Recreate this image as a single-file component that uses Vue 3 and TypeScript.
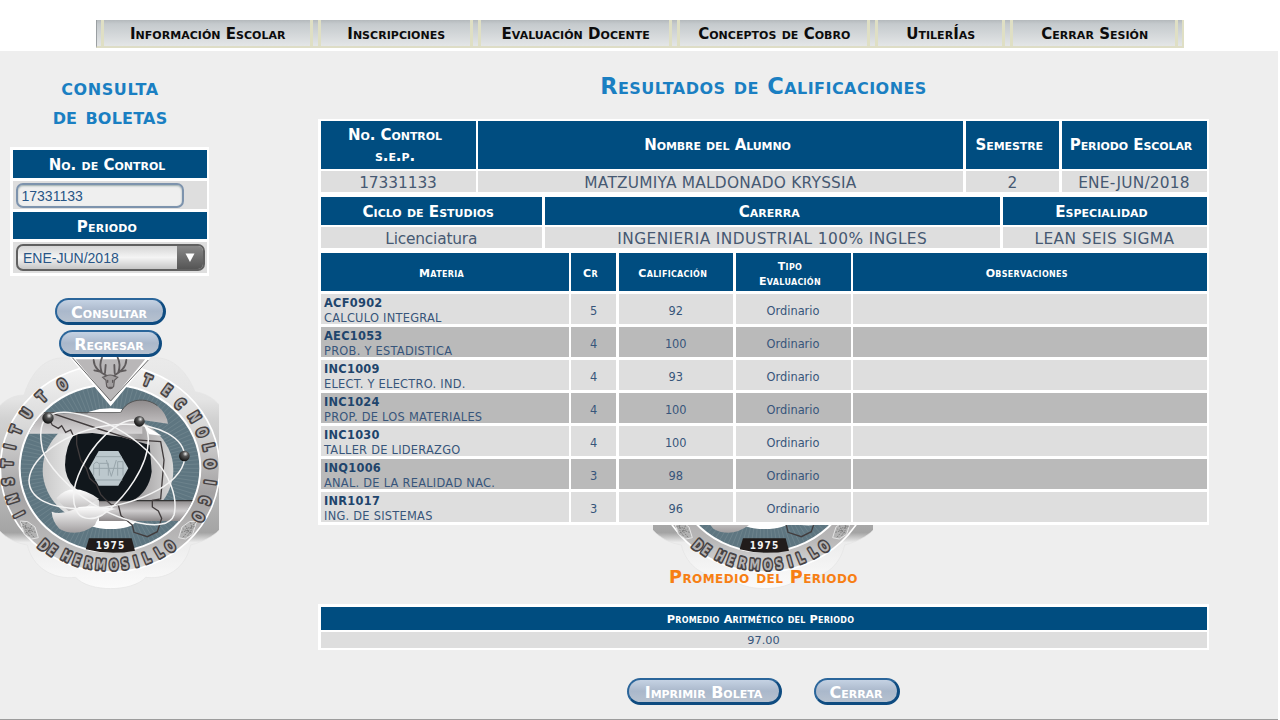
<script setup lang="ts">
interface NavItem { label: string; width: number }
interface Subject { code: string; name: string; credits: number; grade: number; kind: string }
interface Glyph { char: string; x: number; y: number; turn: number }

const navItems: NavItem[] = [
  { label: 'Información Escolar', width: 217 },
  { label: 'Inscripciones', width: 160 },
  { label: 'Evaluación Docente', width: 199 },
  { label: 'Conceptos de Cobro', width: 198 },
  { label: 'UtilerÍas', width: 135 },
  { label: 'Cerrar Sesión', width: 173 },
]

const subjects: Subject[] = [
  { code: 'ACF0902', name: 'CALCULO INTEGRAL', credits: 5, grade: 92, kind: 'Ordinario' },
  { code: 'AEC1053', name: 'PROB. Y ESTADISTICA', credits: 4, grade: 100, kind: 'Ordinario' },
  { code: 'INC1009', name: 'ELECT. Y ELECTRO. IND.', credits: 4, grade: 93, kind: 'Ordinario' },
  { code: 'INC1024', name: 'PROP. DE LOS MATERIALES', credits: 4, grade: 100, kind: 'Ordinario' },
  { code: 'INC1030', name: 'TALLER DE LIDERAZGO', credits: 4, grade: 100, kind: 'Ordinario' },
  { code: 'INQ1006', name: 'ANAL. DE LA REALIDAD NAC.', credits: 3, grade: 98, kind: 'Ordinario' },
  { code: 'INR1017', name: 'ING. DE SISTEMAS', credits: 3, grade: 96, kind: 'Ordinario' },
]

const cx = 333
const cy = 370
const deg = 180 / Math.PI

function ring(spec: [string, number, number][], flip: boolean): Glyph[] {
  return spec.map(([char, x, y]) => ({
    char, x, y,
    turn: Math.atan2(x - cx, cy - y) * deg + (flip ? 180 : 0),
  }))
}

const glyphs: Glyph[] = [
  ...ring([
    ['I', 60, 508], ['N', 40, 462], ['S', 27, 410], ['T', 24, 355], ['I', 32, 305],
    ['T', 50, 255], ['U', 82, 205], ['T', 127, 155], ['O', 190, 118],
    ['T', 445, 106], ['E', 504, 135], ['C', 543, 175], ['N', 587, 215], ['O', 610, 262],
    ['L', 630, 306], ['O', 634, 357], ['I', 634, 412], ['C', 618, 466], ['O', 599, 515],
  ], false),
  ...ring([
    ['D', 135, 601], ['E', 160, 615], ['H', 203, 632], ['E', 234, 645], ['R', 268, 653],
    ['M', 305, 658], ['O', 344, 659], ['S', 378, 656], ['I', 411, 649], ['L', 443, 638],
    ['L', 480, 622], ['O', 513, 604],
  ], true),
]

const rays: string = Array.from({ length: 120 }, (_, i) => {
  const a = (i * 3) / deg
  return `M${cx} ${cy}L${(cx + 268 * Math.cos(a)).toFixed(1)} ${(cy + 250 * Math.sin(a)).toFixed(1)}`
}).join('')
</script>

<template>
  <div class="page">
    <svg class="defs" width="0" height="0" aria-hidden="true">
      <defs>
        <linearGradient id="ringFill" x1="0" y1="0" x2="0" y2="1">
          <stop offset="0" stop-color="#f4f4f4" /><stop offset=".3" stop-color="#d8d8d8" />
          <stop offset=".62" stop-color="#a3a1a2" /><stop offset=".85" stop-color="#b9b8b8" /><stop offset="1" stop-color="#dcdcdc" />
        </linearGradient>
        <linearGradient id="lobeFill" x1="0" y1="0" x2="0" y2="1">
          <stop offset="0" stop-color="#ececec" /><stop offset=".22" stop-color="#e4e4e4" />
          <stop offset=".3" stop-color="#d2d2d2" /><stop offset=".55" stop-color="#bdbdbd" />
          <stop offset=".77" stop-color="#a4a4a4" /><stop offset=".81" stop-color="#ececec" />
          <stop offset="1" stop-color="#fbfbfb" />
        </linearGradient>
        <linearGradient id="steel" x1="0" y1="0" x2="0" y2="1">
          <stop offset="0" stop-color="#8f8b8c" /><stop offset="1" stop-color="#d6d4d5" />
        </linearGradient>
        <linearGradient id="pipe" x1="0" y1="0" x2="0" y2="1">
          <stop offset="0" stop-color="#8e8a8b" /><stop offset=".5" stop-color="#cfcdce" /><stop offset="1" stop-color="#8c8889" />
        </linearGradient>
        <linearGradient id="gear" x1="0" y1="0" x2="1" y2="0">
          <stop offset="0" stop-color="#c9c9c9" /><stop offset=".3" stop-color="#f0f0f0" />
          <stop offset=".75" stop-color="#a6a4a5" /><stop offset="1" stop-color="#d8d8d8" />
        </linearGradient>
        <linearGradient id="cap" x1="0" y1="0" x2="0" y2="1">
          <stop offset="0" stop-color="#fff" /><stop offset="1" stop-color="#a19e9f" />
        </linearGradient>
        <radialGradient id="ball" cx=".6" cy=".3" r=".7">
          <stop offset="0" stop-color="#eee" /><stop offset=".35" stop-color="#555" /><stop offset="1" stop-color="#111" />
        </radialGradient>
        <clipPath id="disc"><ellipse :cx="cx" :cy="cy" rx="268" ry="250" /></clipPath>

        <symbol id="seal" viewBox="0 0 660 750">
          <path
            d="M75 150C100 70 150 30 210 40C250 -10 410 -10 455 40C510 30 560 70 588 140C650 150 690 200 690 260V480C690 540 650 580 575 600C560 665 510 705 440 697C400 742 270 742 230 697C160 705 100 665 85 600C20 590 -30 540 -30 480V260C-30 200 20 150 75 150Z"
            fill="url(#lobeFill)" stroke="#e4e4e4" stroke-width="2"
          />
          <ellipse :cx="cx" :cy="cy" rx="329" ry="311" fill="url(#ringFill)" stroke="#fff" stroke-width="5" />
          <ellipse :cx="cx" :cy="cy" rx="271" ry="251" fill="#5f7681" stroke="#fff" stroke-width="6" />
          <g clip-path="url(#disc)">
            <path :d="rays" stroke="#93a4ac" stroke-width="1.6" opacity=".5" />
            <path d="M270 200Q333 180 400 200L420 215H260Z" fill="#fff" />
            <ellipse cx="327" cy="375" rx="196" ry="170" fill="url(#gear)" />
            <ellipse cx="335" cy="528" rx="75" ry="24" fill="#fff" />
            <path d="M60 266L130 205H365C385 160 440 155 475 182Q503 205 507 236L430 225V266Z" fill="url(#steel)" />
            <path d="M130 203H365C385 160 440 155 475 182" fill="none" stroke="#555" stroke-width="3" />
            <path d="M300 467H660V528H300Z" fill="url(#pipe)" />
            <path d="M300 467H660" stroke="#333" stroke-width="4" />
          </g>
          <path d="M226 268L280 264L365 275L452 300L458 380Q450 440 400 467H305Q200 440 198 360Q200 300 226 268Z" fill="#11171c" />
          <path d="M299 318H358L388 370L358 422H299L270 370Z" fill="#bcc8cd" />
          <path d="M284 392V358Q294 345 301 358V392M301 355H328V392M322 345L337 394L352 345M356 392V350H372V392M282 370H374M290 335H368M288 405H370" fill="none" stroke="#98a5ab" stroke-width="3" />
          <path d="M172 460Q220 405 300 462Q250 485 235 520Q200 495 172 460Z" fill="url(#cap)" />
          <path d="M158 500Q190 512 240 486Q300 480 355 492Q300 500 288 540Q235 580 182 552Q160 530 158 500Z" fill="url(#cap)" />
          <path d="M150 222L160 240L178 250L188 242L200 262L215 255L222 270L233 268V298L245 345L262 370L272 400L292 418L305 448L322 466L338 480H358L366 512L400 540L405 562L445 575L475 560L488 520L478 498L460 486V466L485 462L495 345L485 290L400 284L300 252L160 205" fill="none" stroke="#413c3d" stroke-width="4" />
          <g fill="none" stroke="#f4f4f4" stroke-width="4.5">
            <path d="M128 300C110 195 180 190 260 212C420 255 550 400 525 510C505 570 350 530 250 455C180 400 130 340 128 300Z" />
            <path d="M90 405C95 330 220 245 370 238C480 235 560 280 557 340C550 420 400 490 250 492C150 490 90 460 90 405Z" />
            <path d="M232 495C200 430 270 300 350 245C400 210 445 220 448 280C450 360 380 460 310 510C275 530 240 520 232 495Z" />
          </g>
          <path d="M435 240L488 272L450 268Z" fill="#fff" />
          <circle cx="147" cy="219" r="17" fill="url(#ball)" />
          <circle cx="421" cy="229" r="16" fill="url(#ball)" />
          <circle cx="556" cy="333" r="16" fill="url(#ball)" />

          <path d="M220 38H448L335 177Z" fill="#b9b7b8" stroke="#fff" stroke-width="9" />
          <path d="M220 38L335 168L448 45" fill="none" stroke="#666" stroke-width="3" />
          <g fill="none" stroke="#5f5b5c" stroke-width="5.5" stroke-linecap="round">
            <path d="M322 92C300 80 285 68 284 45M303 80L286 76M308 82Q300 58 309 38M318 84L320 60M345 92C365 80 381 68 382 45M362 80L380 76M358 82Q366 58 356 38M347 84L346 60" />
            <path d="M320 94Q333 86 347 94L356 97L346 106L344 124Q334 138 323 124L321 106L311 97Z" fill="#a19e9f" stroke-width="3.5" />
            <path d="M326 106V112M341 106V112M330 127H338" stroke-width="4" />
          </g>

          <path d="M270 580L398 580L408 617Q333 632 260 613Z" fill="#211c1b" />
          <text x="333" y="613" class="year" text-anchor="middle" textLength="86" lengthAdjust="spacing">1975</text>

          <g v-for="side in [1, -1]" :key="side" :transform="side === 1 ? '' : 'translate(657 0) scale(-1 1)'">
            <path d="M64 528L86 530L108 546L118 578L98 582L76 568Z" fill="#b2b2b2" stroke="#e5e5e5" stroke-width="3" />
            <path d="M66 530L106 578M82 532L78 552L92 574M98 542L90 556L110 562M70 545L96 550M80 564L104 552" stroke="#777" stroke-width="2.5" fill="none" stroke-dasharray="5 3" />
          </g>

          <text
            v-for="(g, i) in glyphs" :key="i" class="glyph" text-anchor="middle"
            :transform="`translate(${g.x} ${g.y}) rotate(${g.turn.toFixed(1)}) scale(.8 1)`" y="16"
          >{{ g.char }}</text>
        </symbol>
      </defs>
    </svg>

    <header class="top">
      <nav class="nav">
        <div v-for="item in navItems" :key="item.label" class="slot" :style="{ width: item.width + 'px' }">
          <a class="nav-link">{{ item.label }}</a>
        </div>
      </nav>
    </header>

    <main class="body">
      <aside class="side">
        <svg class="side-seal" width="220" height="250"><use href="#seal" width="220" height="250" /></svg>
        <h2 class="side-title"><span class="line-one">consulta</span><br><span class="line-two">de boletas</span></h2>
        <div class="form">
          <div class="form-head"><span>No. de Control</span></div>
          <div class="form-row"><div class="field">17331133</div></div>
          <div class="form-head"><span class="wide">Periodo</span></div>
          <div class="form-row select-row">
            <div class="select">
              <span>ENE-JUN/2018</span>
              <i class="arrow"><svg width="12" height="10" viewBox="0 0 12 10"><path d="M1.5 .5H10.5L6 9Z" fill="#fff" /></svg></i>
            </div>
          </div>
        </div>
        <button class="pill consult"><span>Consultar</span></button>
        <button class="pill back"><span>Regresar</span></button>
      </aside>

      <section class="results">
        <svg class="main-seal" width="220" height="250"><use href="#seal" width="220" height="250" /></svg>
        <h1 class="title">Resultados de Calificaciones</h1>

        <div class="sheet">
          <div class="grid student">
            <div class="head"><span>No. Control</span><span>s.e.p.</span></div>
            <div class="head"><span>Nombre del Alumno</span></div>
            <div class="head"><span>Semestre</span></div>
            <div class="head"><span>Periodo Escolar</span></div>
            <div class="value"><span>17331133</span></div>
            <div class="value"><span class="loose">MATZUMIYA MALDONADO KRYSSIA</span></div>
            <div class="value"><span>2</span></div>
            <div class="value"><span class="loose">ENE-JUN/2018</span></div>
          </div>
          <div class="grid career">
            <div class="head"><span>Ciclo de Estudios</span></div>
            <div class="head"><span>Carerra</span></div>
            <div class="head"><span>Especialidad</span></div>
            <div class="value"><span class="tight">Licenciatura</span></div>
            <div class="value"><span class="looser">INGENIERIA INDUSTRIAL 100% INGLES</span></div>
            <div class="value"><span class="looser">LEAN SEIS SIGMA</span></div>
          </div>
          <div class="grid marks marks-head">
            <div class="head">Materia</div>
            <div class="head">Cr</div>
            <div class="head">Calificación</div>
            <div class="head"><span>Tipo</span><span>Evaluación</span></div>
            <div class="head">Observaciones</div>
          </div>
          <div v-for="(s, i) in subjects" :key="s.code" class="grid marks marks-row" :class="{ dark: i % 2 === 1 }">
            <div class="cell subject"><b>{{ s.code }}</b><span>{{ s.name }}</span></div>
            <div class="cell">{{ s.credits }}</div>
            <div class="cell">{{ s.grade }}</div>
            <div class="cell">{{ s.kind }}</div>
            <div class="cell"></div>
          </div>
        </div>

        <h2 class="avg-title">Promedio del Periodo</h2>
        <div class="average">
          <div class="head"><span>Promedio Aritmético del Periodo</span></div>
          <div class="avg-value">97.00</div>
        </div>

        <div class="actions">
          <button class="pill print"><span>Imprimir Boleta</span></button>
          <button class="pill close"><span>Cerrar</span></button>
        </div>
      </section>
    </main>
  </div>
</template>

<style>
body { margin: 0; background: #fff; overflow: hidden; }
</style>

<style scoped>
.page { width: 1280px; height: 720px; overflow: hidden; background: #fff; font-family: Verdana, "DejaVu Sans", sans-serif; box-sizing: border-box; display: flex; flex-direction: column; }
.page * { box-sizing: border-box; }
.defs { position: absolute; }
.top { height: 51px; flex: none; padding: 20px 0 0 96px; }
.nav { width: 1088px; height: 27.5px; display: flex; padding-left: 4px; background: linear-gradient(#b4b9bc, #c5cacd 15%, #d3d7d9 55%, #e4e6e7); border-right: 2px solid #dfdfc4; border-bottom: 2px solid #deddc6; border-left: 1px solid #9a9fa2; }
.slot { flex: none; padding-right: 5.5px; }
.nav-link { height: 100%; display: flex; align-items: center; justify-content: center; border-left: 3px solid #dfdfc4; border-right: 3px solid #dfdfc4; padding: 3px 0 0 2px; font-size: 15px; letter-spacing: .03px; font-weight: 700; font-variant: small-caps; color: #0c0c0c; white-space: nowrap; }

.body { width: 1278px; height: 669px; background: #eee; border-bottom: 1px solid #9c9c9c; display: flex; flex: none; }
.side { width: 220px; height: 668px; position: relative; display: flex; flex-direction: column; align-items: center; flex: none; overflow: hidden; }
.side-seal { position: absolute; left: -1px; top: 294px; }
.side-title { margin: 22px 0 0; height: 59px; line-height: 29px; font-size: 23px; font-variant: small-caps; color: #1a7fc2; text-align: center; white-space: nowrap; }
.line-one { letter-spacing: .6px; }
.line-two { letter-spacing: .2px; }
.form { position: relative; width: 199px; height: 129px; margin-top: 15px; background: #fff; padding: 3px; display: grid; grid-template-rows: 27.5px 28px 27.5px 31px; row-gap: 3px; align-self: flex-start; margin-left: 10px; }
.form-head, .head { background: #004d80; color: #fff; font-weight: 700; font-variant: small-caps; display: flex; flex-direction: column; align-items: center; justify-content: center; white-space: nowrap; }
.form-head { font-size: 15px; padding: 3px 6px 0 0; }
.wide { letter-spacing: .2px; }
.form-row { background: #dedede; padding: 2px 2.5px; }
.field { width: 168px; height: 25px; border: 2px solid #7d93ad; border-radius: 7px; background: #efefef; box-shadow: inset 0 1px 2px #9aa; font: 14px/22px "Liberation Sans", Arial, sans-serif; color: #285586; padding-left: 4px; }
.select-row { padding-top: 1.5px; }
.select { width: 189px; height: 27px; border: 2px solid #606060; border-radius: 7px; background: linear-gradient(#d6d6d6, #f4f4f4 50%, #c6c6c6); display: flex; justify-content: space-between; overflow: hidden; font: 14px/24px "Liberation Sans", Arial, sans-serif; color: #285586; padding-left: 5.5px; }
.arrow { width: 26px; background: linear-gradient(#888, #555); display: flex; align-items: center; justify-content: center; padding-top: 1px; }

.pill { position: relative; height: 27px; border: 2px solid; border-right-width: 3px; border-bottom-width: 3px; border-color: #2a659a #0e4b80 #0e4b80 #2a659a; border-radius: 14px; background: linear-gradient(#c5d2e3, #aab8cb 50%, #b6c1cf); color: #fff; font: 700 16px/20px Verdana, "DejaVu Sans", sans-serif; letter-spacing: -.02px; font-variant: small-caps; padding: 3px 1px 0 0; text-align: center; white-space: nowrap; }
.consult { width: 111px; margin-top: 22px; }
.back { width: 103px; margin-top: 5px; }

.results { flex: 1; position: relative; display: flex; flex-direction: column; }
.main-seal { position: absolute; left: 433px; top: 294px; }
.title { margin: 17px 0 0 98px; width: 891px; height: 36px; line-height: 36px; font-size: 22.5px; letter-spacing: .46px; font-variant: small-caps; color: #1a7fc2; text-align: center; white-space: nowrap; }
.sheet { position: relative; margin: 15px 0 0 98px; width: 891px; height: 406px; background: #fff; padding: 2px 2.5px; }
.grid { display: grid; column-gap: 2.5px; }
.student { grid-template-columns: 155px 485px 93.5px 1fr; grid-template-rows: 47.5px 20.5px; row-gap: 2.5px; font-size: 15px; letter-spacing: -.08px; }
.career { grid-template-columns: 221.5px 455.5px 1fr; grid-template-rows: 27.5px 21px; row-gap: 2.5px; margin-top: 5.5px; font-size: 15.1px; }
.value { background: #dedede; color: #465972; display: flex; align-items: center; justify-content: center; font-size: 15.4px; padding-top: 2.5px; white-space: nowrap; }
.loose { letter-spacing: .22px; }
.looser { letter-spacing: .4px; }
.tight { letter-spacing: -.2px; }
.student .head { line-height: 21px; padding: 1.5px 6px 0 0; }
.career .head { padding: 3px 6px 0 0; }
.marks { grid-template-columns: 248px 45px 114.5px 115px 1fr; }
.marks-head { height: 38px; margin: 5px 0 3px; font-size: 11px; letter-spacing: .3px; line-height: 15px; }
.marks-head .head { padding: 3px 6px 0 0; }
.marks-row { grid-template-rows: 30px; height: 30px; margin-bottom: 3px; font-size: 11.4px; }
.cell { height: 30px; background: #dedede; color: #37557a; display: flex; align-items: center; justify-content: center; padding-top: 3px; }
.dark .cell { background: #bababa; }
.subject { flex-direction: column; align-items: flex-start; line-height: 15px; letter-spacing: .27px; padding: 1.5px 0 0 3.5px; justify-content: flex-start; }
.subject b { color: #1f456c; }

.avg-title { position: relative; margin: 41px 0 0 98px; width: 891px; height: 22px; line-height: 22px; font-size: 17.7px; letter-spacing: .42px; font-variant: small-caps; color: #f77f14; text-align: center; }
.average { margin: 16px 0 0 98px; width: 891px; height: 46px; background: #fff; padding: 3px 2.5px; font-size: 11.3px; }
.average .head { height: 22.5px; padding: 2px 6px 0 0; letter-spacing: .2px; }
.avg-value { margin-top: 2.5px; height: 15.5px; line-height: 18px; background: #dedede; color: #37557a; text-align: center; }
.actions { display: flex; margin: 28px 0 0 407px; gap: 32px; }
.print { width: 155px; }
.close { width: 86px; }

.glyph { font: 700 44px "DejaVu Sans Condensed", sans-serif; fill: #b4b2b3; stroke: #474344; stroke-width: 11px; paint-order: stroke; stroke-linejoin: round; }
.year { font: 700 30px "DejaVu Sans Condensed", sans-serif; fill: #f4f4f4; }
</style>
